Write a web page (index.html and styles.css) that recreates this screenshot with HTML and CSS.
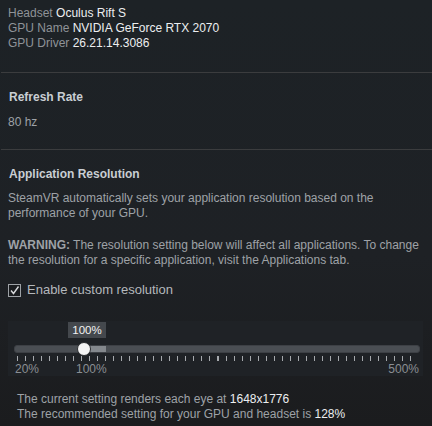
FILE: index.html
```
<!DOCTYPE html>
<html lang="en">
<head>
    <meta charset="UTF-8">
    <title>Video Settings</title>
    <link rel="stylesheet" href="styles.css">
</head>
<body>
    <div class="info">
        <div><span class="label">Headset</span> <span class="value">Oculus Rift S</span></div>
        <div><span class="label">GPU Name</span> <span class="value">NVIDIA GeForce RTX 2070</span></div>
        <div><span class="label">GPU Driver</span> <span class="value">26.21.14.3086</span></div>
    </div>
    <div class="section refresh">
        <div class="title">Refresh Rate</div>
        <div class="text">80 hz</div>
    </div>
    <div class="section resolution">
        <div class="title">Application Resolution</div>
        <p class="text">SteamVR automatically sets your application resolution based on the performance of your GPU.</p>
        <p class="text warn"><b>WARNING:</b> The resolution setting below will affect all applications. To change the resolution for a specific application, visit the Applications tab.</p>
        <label class="check">
            <svg width="13" height="13" viewBox="0 0 13 13">
                <rect x="0.5" y="0.5" width="12" height="12" fill="#1a1c1f" stroke="#9ea2a6"/>
                <path d="M3 6.5 L5.5 9.5 L10.5 2.5" fill="none" stroke="#d8dadc" stroke-width="1.4"/>
            </svg>
            Enable custom resolution
        </label>
        <div class="slider">
            <div class="bubble-row"><span class="bubble">100%</span></div>
            <div class="track">
                <div class="fill"></div>
                <div class="thumb"></div>
            </div>
            <div class="ticks"></div>
            <div class="marks">
                <span>20%</span>
                <span class="mid">100%</span>
                <span class="end">500%</span>
            </div>
        </div>
    </div>
    <div class="summary">
        <div>The current setting renders each eye at <span class="value">1648x1776</span></div>
        <div>The recommended setting for your GPU and headset is <span class="value">128%</span></div>
    </div>
</body>
</html>
```

FILE: styles.css
```
body {
    margin: 0;
    font-family: "Liberation Sans", Arial, sans-serif;
    font-size: 12px;
    color: #9ea2a7;
    background: linear-gradient(180deg, #1d2226 0%, #1e2125 60%, #1b1c1e 100%);
    height: 426px;
    overflow: hidden;
}
.info {
    padding: 6px 8px 21px;
    line-height: 15px;
    border-bottom: 1px solid #3b3c3e;
    margin-left: 1px;
}
.info > div {
    margin-left: -1px;
}
.label {
    color: #8f9398;
}
.value {
    color: #eceef0;
}
.section {
    padding: 17px 8px 0;
}
.refresh {
    padding-bottom: 19px;
    border-bottom: 1px solid #3b3c3e;
    margin-left: 1px;
    padding-left: 7px;
}
.title {
    font-weight: bold;
    color: #c9ced3;
    line-height: 15px;
    padding-left: 1px;
}
.text {
    line-height: 15px;
    margin: 10px 0 0;
    color: #9ea2a7;
}
.resolution .text {
    margin-top: 9px;
}
.resolution .warn {
    margin-top: 17px;
}
.check {
    display: flex;
    align-items: center;
    gap: 6px;
    margin-top: 14px;
    font-size: 13px;
    line-height: 16px;
    color: #b4b8bc;
}
.slider {
    margin: 23px 1px 0 0;
    background: #1f2226;
    height: 55px;
    padding: 1px 3px 0 6px;
    box-sizing: border-box;
}
.bubble-row {
    height: 17px;
    padding-left: 54px;
}
.bubble {
    display: inline-block;
    width: 38px;
    height: 16px;
    line-height: 16px;
    text-align: center;
    background: #44484d;
    color: #f2f2f2;
    font-size: 11.5px;
}
.track {
    position: relative;
    margin-top: 6px;
    height: 6px;
    border-radius: 3px;
    background: #4a4e53;
    border: 1px solid #3d4045;
}
.fill {
    position: absolute;
    left: 69px;
    top: 0;
    width: 22px;
    height: 6px;
    background: #84888d;
}
.thumb {
    position: absolute;
    left: 62px;
    top: -4px;
    width: 12px;
    height: 12px;
    border-radius: 50%;
    background: #f4f4f4;
    border: 1px solid #2a2c2f;
}
.ticks {
    margin: 3px 4px 0 3px;
    height: 5px;
    background: repeating-linear-gradient(90deg, #a6a9ad 0 1px, transparent 1px 8.02px);
}
.marks {
    position: relative;
    display: flex;
    justify-content: space-between;
    padding: 1px 1px 0 1px;
    line-height: 14px;
    color: #8a8e93;
}
.marks .mid {
    position: absolute;
    left: 62px;
}
.summary {
    padding: 16px 17px 0;
    line-height: 15px;
    color: #9ea2a7;
}
```
